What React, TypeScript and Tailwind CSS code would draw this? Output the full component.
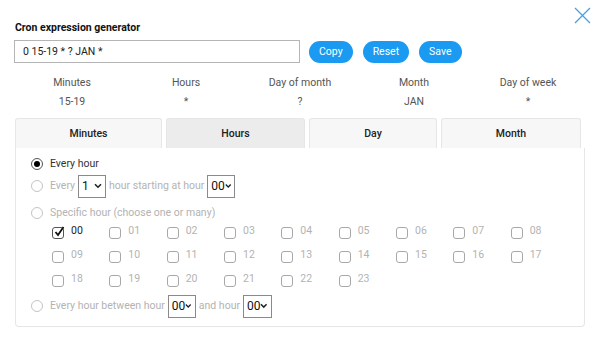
import React from "react";

const hours = Array.from({ length: 24 }, (_, i) => String(i).padStart(2, "0"));

const fields = [
  { label: "Minutes", value: "15-19" },
  { label: "Hours", value: "*" },
  { label: "Day of month", value: "?" },
  { label: "Month", value: "JAN" },
  { label: "Day of week", value: "*" },
];

const tabs = ["Minutes", "Hours", "Day", "Month"];

function Radio({ checked = false }: { checked?: boolean }) {
  return (
    <span
      className={`flex h-[12px] w-[12px] shrink-0 items-center justify-center rounded-full border ${
        checked ? "border-[#555]" : "border-[#c4c4c4]"
      } bg-white`}
    >
      {checked && <span className="h-[6px] w-[6px] rounded-full bg-black" />}
    </span>
  );
}

function Select({ value, width }: { value: string; width: string }) {
  return (
    <span
      className={`inline-flex h-[23px] ${width} items-center justify-between border border-[#8a8a8a] bg-white pl-[3px] pr-[3px] text-[12px] text-[#111]`}
    >
      {value}
      <svg width="8" height="6" viewBox="0 0 8 6" fill="none">
        <path d="M1 1.2l3 3 3-3" stroke="#222" strokeWidth="1.6" />
      </svg>
    </span>
  );
}

function Check({ checked = false }: { checked?: boolean }) {
  return (
    <span
      className={`relative flex h-[12px] w-[12px] shrink-0 items-center justify-center rounded-[3px] border ${
        checked ? "border-[#555]" : "border-[#a8a8a8]"
      } bg-white`}
    >
      {checked && (
        <svg width="11" height="11" viewBox="0 0 11 11" className="absolute -top-[2px] left-[1px]">
          <path d="M1.5 6l2.5 3L9.5 1" stroke="#111" strokeWidth="1.8" fill="none" />
        </svg>
      )}
    </span>
  );
}

export default function App() {
  return (
    <div
      className="relative h-[342px] w-[600px] bg-white px-[14px] pt-[20px] text-[10.5px] text-[#333]"
      style={{ fontFamily: "Roboto, 'Liberation Sans', sans-serif" }}
    >
      <button className="absolute right-[8px] top-[6px] p-[1px]">
        <svg width="17" height="17" viewBox="0 0 17 17">
          <path d="M1 1l15 15M16 1L1 16" stroke="#4a9fe0" strokeWidth="1.3" />
        </svg>
      </button>

      <h1 className="ml-[1px] text-[10.5px] font-bold leading-[16px] text-[#111]">Cron expression generator</h1>

      <div className="mt-[4px] flex items-center">
        <div className="flex h-[23px] w-[286px] items-center border border-[#b5b5b5] px-[8px] text-[10.5px] text-[#222]">
          0 15-19 * ? JAN *
        </div>
        <div className="ml-[9px] flex gap-[10px]">
          {["Copy", "Reset", "Save"].map((b) => (
            <button
              key={b}
              className="h-[22px] rounded-full bg-[#1a9af0] px-[10px] text-[10.5px] leading-[22px] text-white"
            >
              {b}
            </button>
          ))}
        </div>
      </div>

      <div className="mt-[12px] grid grid-cols-5 px-[1px] text-center text-[#555]">
        {fields.map((f) => (
          <div key={f.label} className="flex flex-col gap-[4px]">
            <span className="leading-[15px]">{f.label}</span>
            <span className="leading-[15px]">{f.value}</span>
          </div>
        ))}
      </div>

      <div className="mt-[9px] flex gap-[4px] pl-[1px] pr-[4px]">
        {tabs.map((t, i) => (
          <div
            key={t}
            className={`flex h-[30px] items-center justify-center rounded-t-[3px] border border-b-0 border-[#e6e6e6] font-medium text-[#222] ${
              i === 1 ? "bg-[#ececec]" : "bg-[#f7f7f7]"
            } ${i === 0 ? "w-[147px]" : i === 1 ? "w-[139px]" : i === 2 ? "w-[128px]" : "w-[140px]"}`}
          >
            {t}
          </div>
        ))}
      </div>

      <div className="ml-[1px] h-[179px] w-[570px] rounded-b-[4px] border border-t-0 border-[#e6e6e6] pl-[15px] pt-[8px]">
        <div className="flex h-[16px] items-center gap-[7px]">
          <Radio checked />
          <span className="text-[#333]">Every hour</span>
        </div>

        <div className="mt-[2px] flex h-[24px] items-center text-[#b3b3b3]">
          <Radio />
          <span className="ml-[7px] mr-[3px]">Every</span>
          <Select value="1" width="w-[28px]" />
          <span className="mx-[3px]">hour starting at hour</span>
          <Select value="00" width="w-[28px]" />
        </div>

        <div className="mt-[7px] flex h-[16px] items-center gap-[7px] text-[#b3b3b3]">
          <Radio />
          <span>Specific hour (choose one or many)</span>
        </div>

        <div className="ml-[21px] mt-[4px] grid w-[516px] grid-cols-9 gap-y-[8px]">
          {hours.map((h, i) => (
            <div key={h} className="flex h-[16px] items-center gap-[7px]">
              <Check checked={i === 0} />
              <span className={`-mt-[4px] ${i === 0 ? "text-[#222]" : "text-[#b3b3b3]"}`}>{h}</span>
            </div>
          ))}
        </div>

        <div className="mt-[5px] flex h-[24px] items-center text-[#b3b3b3]">
          <Radio />
          <span className="ml-[7px] mr-[3px]">Every hour between hour</span>
          <Select value="00" width="w-[28px]" />
          <span className="mx-[3px]">and hour</span>
          <Select value="00" width="w-[29px]" />
        </div>
      </div>
    </div>
  );
}
